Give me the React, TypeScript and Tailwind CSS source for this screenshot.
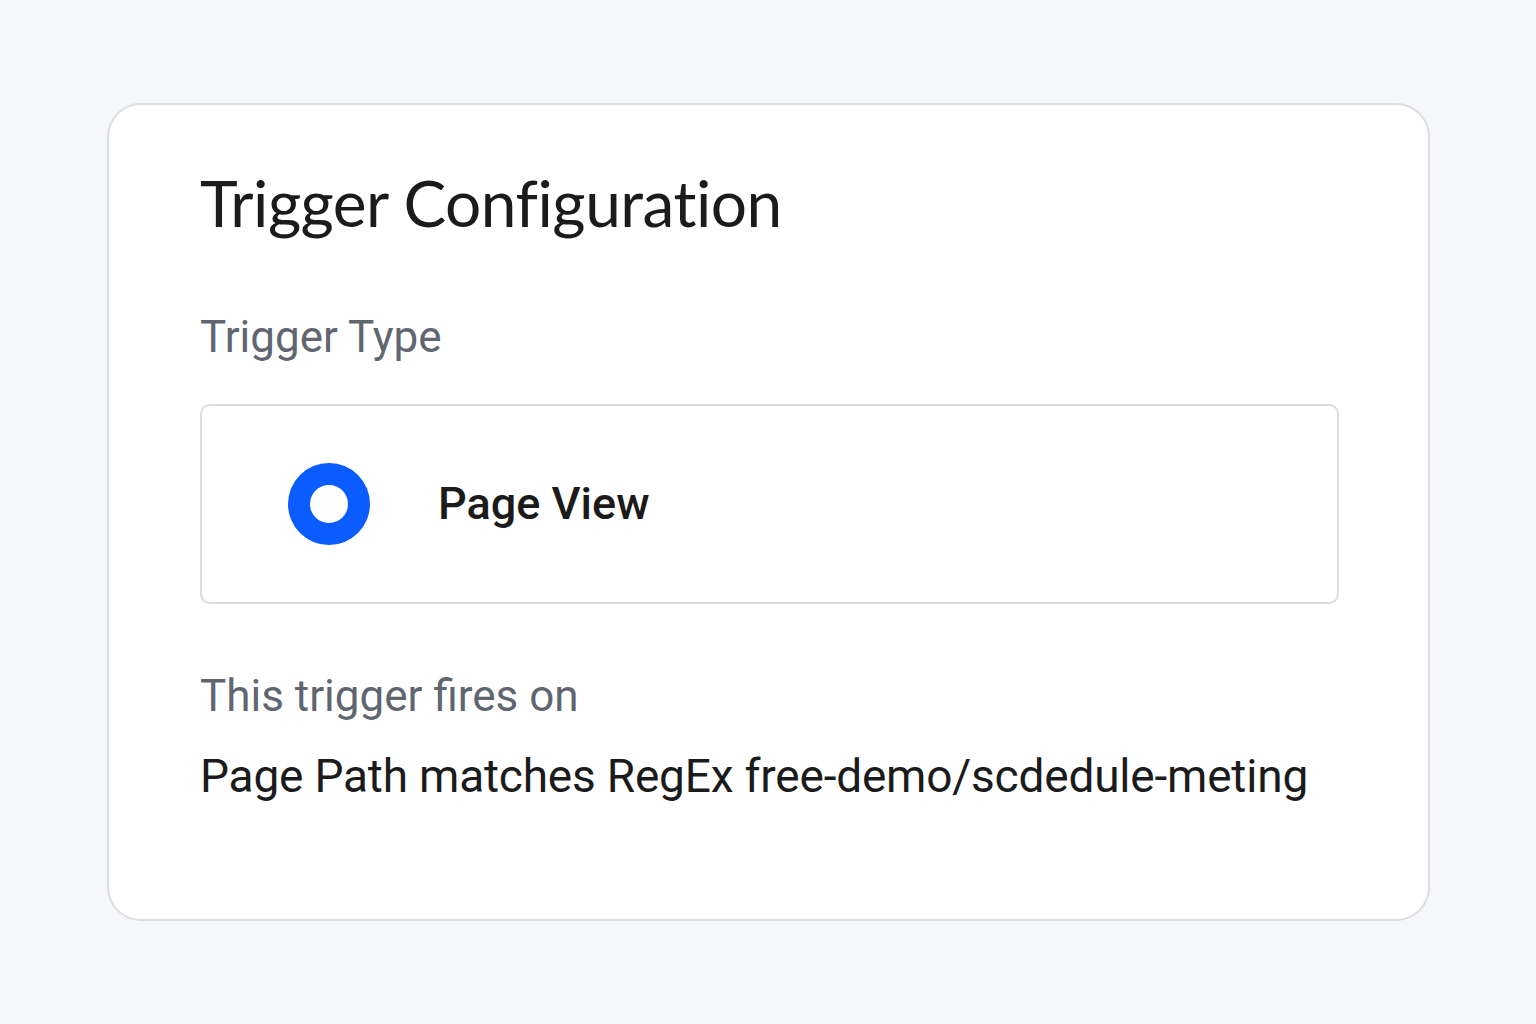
export default function App() {
  return (
    <div className="min-h-screen w-full bg-[#f6f7f9] pt-[103px] pl-[107px]" style={{ fontFamily: 'Roboto, "Noto Sans", sans-serif' }}>
      <div className="w-[1323px] h-[818px] rounded-[34px] border-2 border-[#dcdde1] bg-white pl-[91px] pr-[90px] pt-[58px]">
        <h1 className="text-[64px] leading-[80px] font-normal text-[#1b1b1b] tracking-[-0.5px]" style={{ fontFamily: 'Lato, sans-serif' }}>
          Trigger Configuration
        </h1>

        <div className="mt-[68px] text-[44px] leading-[52px] text-[#5f6670]">Trigger Type</div>

        <div className="mt-[41px] h-[200px] w-[1139px] rounded-[10px] border-2 border-[#dadce0] flex items-center pl-[86px]">
          <div className="w-[82px] h-[82px] rounded-full bg-[#0a5cff] flex items-center justify-center">
            <div className="w-[38px] h-[38px] rounded-full bg-white" />
          </div>
          <span className="ml-[68px] text-[45px] font-medium text-[#1b1b1b]">Page View</span>
        </div>

        <div className="mt-[66px] text-[44px] leading-[52px] text-[#5f6670]">This trigger fires on</div>
        <div className="mt-[28px] text-[46px] leading-[52px] text-[#1b1b1b] tracking-[-0.2px]">
          Page Path matches RegEx free-demo/scdedule-meting
        </div>
      </div>
    </div>
  );
}
